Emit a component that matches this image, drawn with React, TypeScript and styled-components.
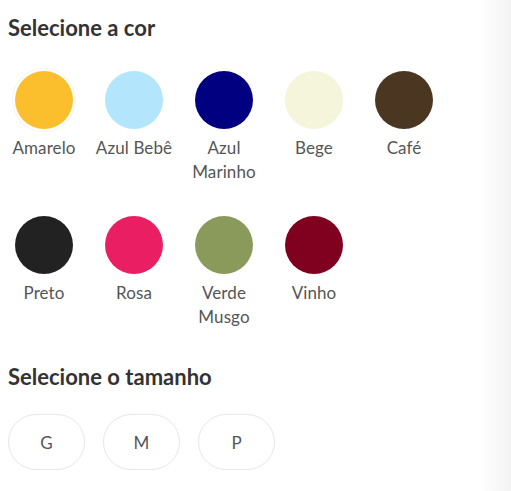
import React from "react";
import styled, { createGlobalStyle } from "styled-components";

const GlobalStyle = createGlobalStyle`
  html, body { margin: 0; padding: 0; background: #fff; }
  body { font-family: Lato, "Noto Sans", sans-serif; }
  * { box-sizing: border-box; }
`;

const Page = styled.div`
  width: 511px;
  height: 491px;
  display: flex;
  background: linear-gradient(to right, #fff 0, #fff 480px, #f3f3f3 511px);
`;

const Panel = styled.div`
  padding: 14px 0 0 8px;
  display: flex;
  flex-direction: column;
`;

const Heading = styled.h2`
  margin: 0;
  font-size: 22px;
  line-height: 28px;
  font-weight: 700;
  color: #333;
`;

const ColorGrid = styled.div`
  margin: 29px 0 0 -4px;
  display: grid;
  grid-template-columns: repeat(5, 80px);
  column-gap: 10px;
  row-gap: 32px;
`;

const ColorItem = styled.div`
  display: flex;
  flex-direction: column;
  align-items: center;
`;

const Swatch = styled.div<{ $color: string; $selected?: boolean }>`
  width: 58px;
  height: 58px;
  border-radius: 50%;
  background: ${(p) => p.$color};
  box-shadow: ${(p) =>
    p.$selected ? "0 0 0 2px #fff, 0 0 0 3px #f4f4f4" : "none"};
`;

const ColorLabel = styled.span`
  margin-top: 7px;
  font-size: 17px;
  line-height: 24px;
  letter-spacing: 0.1px;
  color: #555;
  text-align: center;
`;

const SizeHeading = styled(Heading)`
  margin-top: 34px;
`;

const SizeRow = styled.div`
  margin-top: 23px;
  display: flex;
  gap: 18px;
`;

const SizeButton = styled.button`
  width: 77px;
  height: 56px;
  border: 1px solid #e6e6ec;
  border-radius: 28px;
  background: #fff;
  font-family: Lato, "Noto Sans", sans-serif;
  font-size: 17px;
  color: #555;
  padding: 0;
  cursor: pointer;
`;

const colors = [
  { name: "Amarelo", color: "#fbbf2e", selected: true },
  { name: "Azul Bebê", color: "#b3e5fc" },
  { name: "Azul Marinho", color: "#000080" },
  { name: "Bege", color: "#f5f5dc" },
  { name: "Café", color: "#4b3621" },
  { name: "Preto", color: "#222222" },
  { name: "Rosa", color: "#e91e63" },
  { name: "Verde Musgo", color: "#8a9a5b" },
  { name: "Vinho", color: "#800020" },
];

const sizes = ["G", "M", "P"];

export default function App() {
  return (
    <>
      <GlobalStyle />
      <Page>
        <Panel>
          <Heading>Selecione a cor</Heading>
          <ColorGrid>
            {colors.map((c) => (
              <ColorItem key={c.name}>
                <Swatch $color={c.color} $selected={c.selected} />
                <ColorLabel>{c.name}</ColorLabel>
              </ColorItem>
            ))}
          </ColorGrid>
          <SizeHeading>Selecione o tamanho</SizeHeading>
          <SizeRow>
            {sizes.map((s) => (
              <SizeButton key={s}>{s}</SizeButton>
            ))}
          </SizeRow>
        </Panel>
      </Page>
    </>
  );
}
